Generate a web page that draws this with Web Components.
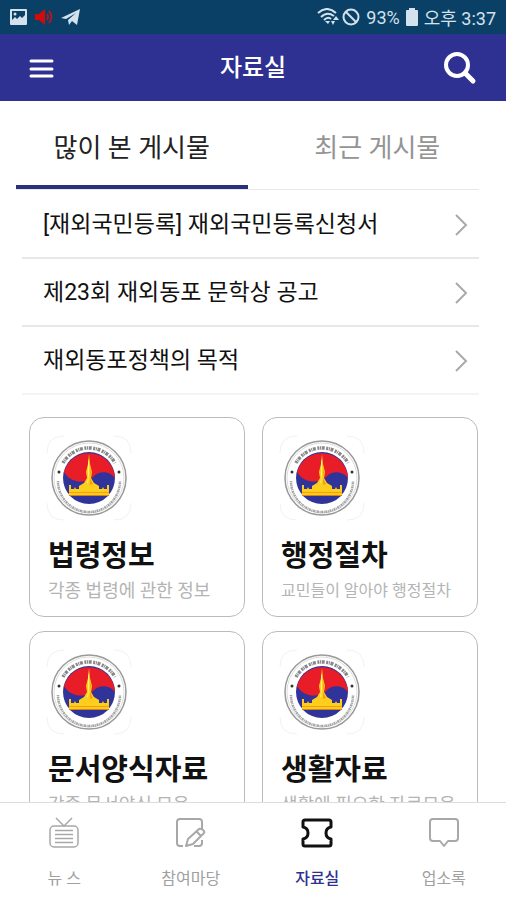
<!DOCTYPE html>
<html lang="ko">
<head>
<meta charset="utf-8">
<meta name="viewport" content="width=device-width, initial-scale=1">
<title>자료실</title>
<style>
  body {
    margin: 0;
    background: #fff;
    color: #111;
    font-family: Roboto, "Noto Sans CJK KR", sans-serif;
  }
</style>
</head>
<body>
<archive-app>
  <status-bar slot="top" battery="93%" time="오후 3:37"></status-bar>
  <app-header slot="top">자료실</app-header>

  <tab-bar>
    <tab-item selected>많이 본 게시물</tab-item>
    <tab-item>최근 게시물</tab-item>
  </tab-bar>
  <post-list>
    <post-item>[재외국민등록] 재외국민등록신청서</post-item>
    <post-item>제23회 재외동포 문학상 공고</post-item>
    <post-item>재외동포정책의 목적</post-item>
  </post-list>
  <card-grid>
    <category-card name="법령정보">각종 법령에 관한 정보</category-card>
    <category-card name="행정절차" compact>교민들이 알아야 행정절차</category-card>
    <category-card name="문서양식자료">각종 문서양식 모음</category-card>
    <category-card name="생활자료">생활에 필요한 자료모음</category-card>
  </card-grid>

  <bottom-nav slot="bottom">
    <nav-item icon="news">뉴 스</nav-item>
    <nav-item icon="write">참여마당</nav-item>
    <nav-item icon="ticket" selected>자료실</nav-item>
    <nav-item icon="bubble">업소록</nav-item>
  </bottom-nav>
</archive-app>

<script>
(function() {
  class BaseElement extends HTMLElement {
    connectedCallback() {
      if (this.shadowRoot) {
        return;
      }
      this.attachShadow({mode: 'open'}).innerHTML =
        `<style>
          * { box-sizing: border-box; }
          :host { box-sizing: border-box; display: block; }
          a { color: inherit; text-decoration: none; }
          button { background: none; border: 0; color: inherit; cursor: pointer; font: inherit; padding: 0; }
          svg { display: block; }
        </style>` + this.render();
    }
  }

  class ArchiveApp extends BaseElement {
    render() {
      return `<style>
          :host {
            display: flex;
            flex-direction: column;
            height: 100vh;
          }
          main {
            flex: 1;
            min-height: 0;
            overflow-y: auto;
            scrollbar-width: none;
          }
        </style>
        <slot name="top"></slot>
        <main><slot></slot></main>
        <slot name="bottom"></slot>`;
    }
  }

  class StatusBar extends BaseElement {
    render() {
      return `<style>
          :host {
            align-items: center;
            background: #0a4065;
            color: #d3e2ec;
            display: flex;
            flex: none;
            font-size: 18px;
            height: 34px;
            justify-content: space-between;
            padding: 0 10px;
          }
          div { align-items: center; display: flex; gap: 6px; }
          .left { gap: 8px; }
          .signal { gap: 2px; }
        </style>
        <div class="left">
          <svg width="17" height="16" viewBox="0 0 17 16">
            <path fill="#d3e2ec" fill-rule="evenodd" d="M1 0h15a1 1 0 0 1 1 1v14a1 1 0 0 1-1 1H1a1 1 0 0 1-1-1V1a1 1 0 0 1 1-1zM2 2v9l3-3 2 2 3-3 2 2 3-3V2z"/>
            <circle cx="5" cy="5" r="1.5" fill="#d3e2ec"/>
          </svg>
          <svg width="18" height="16" viewBox="0 0 18 16">
            <path fill="#d40a0a" d="M0 5h4l6-5v16l-6-5H0z"/>
            <path fill="none" stroke="#a51c2c" stroke-width="2" d="M12 5q2 3 0 6M14 2q5 6 0 12"/>
          </svg>
          <svg width="19" height="16" viewBox="0 0 19 16">
            <path fill="#d3e2ec" d="M0 9 19 0l-3 16-5-4-3 4-1-5 8-7-10 6z"/>
          </svg>
        </div>
        <div>
          <div class="signal">
            <svg width="23" height="18" viewBox="0 0 23 18" fill="none" stroke="#d3e2ec" stroke-width="2">
              <path d="M1 5q9-8 18 0M4 9q6-6 13-1M7 12q4-4 7-1"/>
              <path stroke="none" fill="#d3e2ec" d="M8 13h5l-2 3zM19 8l3 4h-6zM14 13h4l-2 4z"/>
            </svg>
            <svg width="18" height="18" viewBox="0 0 18 18" fill="none" stroke="#d3e2ec" stroke-width="2">
              <circle cx="9" cy="9" r="7.500"/><path d="m4 4 10 10"/>
            </svg>
          </div>
          <span>${this.getAttribute('battery')}</span>
          <svg width="12" height="18" viewBox="0 0 12 18">
            <path fill="#d3e2ec" d="M3 0h6v2h2q1 0 1 1v14q0 1-1 1H1q-1 0-1-1V3q0-1 1-1h2z"/>
          </svg>
          <span>${this.getAttribute('time')}</span>
        </div>`;
    }
  }

  class AppHeader extends BaseElement {
    render() {
      return `<style>
          :host { flex: none; }
          header {
            align-items: center;
            background: #2e3192;
            color: #fff;
            display: flex;
            height: 67px;
            justify-content: space-between;
            padding: 0 29px;
          }
          h1 { font-size: 24px; font-weight: 500; line-height: 32px; margin: 0; }
          button { display: flex; width: 34px; }
          .search { justify-content: flex-end; }
        </style>
        <header>
          <button aria-label="메뉴">
            <svg width="26" height="20" viewBox="0 0 26 20" fill="none" stroke="#fff" stroke-width="3" stroke-linecap="round">
              <path d="M2 3h21M2 11h21M2 18h21"/>
            </svg>
          </button>
          <h1><slot></slot></h1>
          <button class="search" aria-label="검색">
            <svg width="34" height="34" viewBox="0 0 34 34" fill="none" stroke="#fff" stroke-width="4">
              <circle cx="14" cy="14" r="11"/>
              <path stroke-width="5" stroke-linecap="round" d="m22 22 8 8"/>
            </svg>
          </button>
        </header>`;
    }
  }

  class TabBar extends BaseElement {
    connectedCallback() {
      super.connectedCallback();
      this.addEventListener('click', e => {
        const tab = e.target.closest('tab-item');
        if (!tab) {
          return;
        }
        this.querySelectorAll('tab-item').forEach(item => {
          item.toggleAttribute('selected', item === tab);
        });
      });
    }

    render() {
      return `<style>
          :host {
            display: flex;
            padding: 0 27px 0 16px;
          }
        </style>
        <slot></slot>`;
    }
  }

  class TabItem extends BaseElement {
    render() {
      return `<style>
          :host {
            border-bottom: 1px solid #e8e8e8;
            color: #949494;
            flex: 1;
          }
          :host([selected]) { color: #222; }
          button {
            border-bottom: 4px solid transparent;
            font-size: 26px;
            height: 88px;
            line-height: 36px;
            padding: 10px 0 0 28px;
            width: 100%;
          }
          :host([selected]) button { border-color: #29317f; padding-left: 0; }
        </style>
        <button><slot></slot></button>`;
    }
  }

  class PostList extends BaseElement {
    render() {
      return `<style>
          :host { padding: 1px 27px 0 22px; }
        </style>
        <slot></slot>`;
    }
  }

  class PostItem extends BaseElement {
    render() {
      return `<style>
          :host { border-bottom: 2px solid #e8e8e8; }
          :host(:last-child) { border-bottom-color: #f4f4f4; }
          a {
            align-items: center;
            display: flex;
            font-size: 23px;
            justify-content: space-between;
            line-height: 32px;
            padding: 18px 11px 16px 21px;
          }
        </style>
        <a href="#">
          <span><slot></slot></span>
          <svg width="14" height="24" viewBox="0 0 14 24" fill="none" stroke="#aaa" stroke-width="2">
            <path d="m2 2 10 10L2 22"/>
          </svg>
        </a>`;
    }
  }

  class SealLogo extends BaseElement {
    render() {
      return `<svg width="86" height="86" viewBox="0 0 86 86" fill="none">
          <path stroke="#eef3f3" d="M1 18Q1 1 18 1M68 1q17 0 17 17M1 68q0 17 17 17M68 85q17 0 17-17"/>
          <circle cx="43" cy="43" r="37" fill="#fff" stroke="#999" stroke-width="1.500"/>
          <circle cx="43" cy="43" r="35" stroke="#ddd"/>
          <!-- lettering round the rim -->
          <path stroke="#888" stroke-width="3.500" stroke-dasharray="2 .7 1 .7 3 1.500" d="M17 28a30 30 0 0 1 52 0"/>
          <path stroke="#a5a5a5" stroke-width="2.500" stroke-dasharray="1 .6 2 .6" d="M12 46a31 31 0 0 0 62 0"/>
          <circle cx="13" cy="37" r="1.500" fill="#333"/>
          <circle cx="73" cy="37" r="1.500" fill="#333"/>
          <circle cx="43" cy="43" r="26" fill="#30349a"/>
          <path fill="#e91d27" d="M18 37a26 26 0 0 1 51 7c-3-8-16-9-21-3-7 8-23 8-30-4z"/>
          <!-- golden stupa -->
          <path fill="#ffce1c" d="m43 19 1 10 2 8-1 6 3 5 5 3v3h3l1-2 1 2h3v-4h2v10H23V50h2v4h3l1-2 1 2h3v-3l5-3 3-5-1-6 2-8z"/>
          <path fill="#f3a015" d="M44 32l1 5-1 6 3 6-3 1zM23 57h40v1H23z"/>
          <path fill="#d9820f" d="M23 60h40v1H23z"/>
          <path fill="#fff27a" d="m42 27 1-3v16l-1 8h-1l1-5z"/>
        </svg>`;
    }
  }

  class CardGrid extends BaseElement {
    render() {
      return `<style>
          :host {
            display: grid;
            gap: 14px 17px;
            grid-template-columns: 1fr 1fr;
            padding: 22px 28px 20px 29px;
          }
        </style>
        <slot></slot>`;
    }
  }

  class CategoryCard extends BaseElement {
    render() {
      return `<style>
          a {
            border: 1px solid #bbb;
            border-radius: 15px;
            display: block;
            padding: 17px 16px 12px;
          }
          h2 {
            font-size: 29px;
            font-weight: 700;
            line-height: 40px;
            margin: 15px 0 0 2px;
          }
          p {
            color: #b4b4b4;
            font-size: 18px;
            line-height: 26px;
            margin: 2px 0 0 2px;
            white-space: nowrap;
          }
          :host([compact]) p { font-size: 16px; }
        </style>
        <a href="#">
          <seal-logo></seal-logo>
          <h2>${this.getAttribute('name')}</h2>
          <p><slot></slot></p>
        </a>`;
    }
  }

  class BottomNav extends BaseElement {
    render() {
      return `<style>
          :host { flex: none; }
          nav {
            background: #fff;
            border-top: 1px solid #ddd;
            display: flex;
            height: 98px;
          }
        </style>
        <nav><slot></slot></nav>`;
    }
  }

  const navIcons = {
    news: `<path stroke-width="1.500" d="m8 1 8 8 8-8"/><rect stroke-width="1.500" x="2" y="9" width="28" height="21" rx="4"/>
      <path stroke-width="1.500" d="M7 13.500h18M7 17.500h18M7 21.500h18M7 25.500h18"/>`,
    write: `<path stroke-width="2" d="M27 12V5q0-3-3-3H5Q2 2 2 5v21q0 3 3 3h3M27 23v3q0 3-3 3h-5"/>
      <path stroke-width="2" stroke-linejoin="round" d="m11 29 2-7 11-10q2-1 4 1t1 3L18 27zM22 15l4 4"/>`,
    ticket: `<path stroke-width="3" stroke-linejoin="round" d="M4 3h24q2 0 2 2v5q-5 1-5 6t5 6v5q0 2-2 2H4q-2 0-2-2v-5q5-1 5-6t-5-6V5q0-2 2-2z"/>`,
    bubble: `<path stroke-width="2" stroke-linejoin="round" d="M5 2h22q3 0 3 3v16q0 3-3 3h-7l-4 5-4-5H5q-3 0-3-3V5q0-3 3-3z"/>`
  };

  class NavItem extends BaseElement {
    render() {
      return `<style>
          :host {
            color: #a0a0a0;
            flex: 1;
          }
          :host([selected]) { color: #2e3192; font-weight: 500; }
          a {
            align-items: center;
            display: flex;
            flex-direction: column;
            font-size: 16px;
            gap: 16px;
            line-height: 24px;
            padding: 14px 0 0 2px;
          }
          svg { stroke: #a8a8a8; }
          :host([selected]) svg { stroke: #111; }
        </style>
        <a href="#">
          <svg width="32" height="34" viewBox="0 0 32 34" fill="none">${navIcons[this.getAttribute('icon')]}</svg>
          <span><slot></slot></span>
        </a>`;
    }
  }

  customElements.define('archive-app', ArchiveApp);
  customElements.define('status-bar', StatusBar);
  customElements.define('app-header', AppHeader);
  customElements.define('tab-bar', TabBar);
  customElements.define('tab-item', TabItem);
  customElements.define('post-list', PostList);
  customElements.define('post-item', PostItem);
  customElements.define('seal-logo', SealLogo);
  customElements.define('card-grid', CardGrid);
  customElements.define('category-card', CategoryCard);
  customElements.define('bottom-nav', BottomNav);
  customElements.define('nav-item', NavItem);
}());
</script>
</body>
</html>
